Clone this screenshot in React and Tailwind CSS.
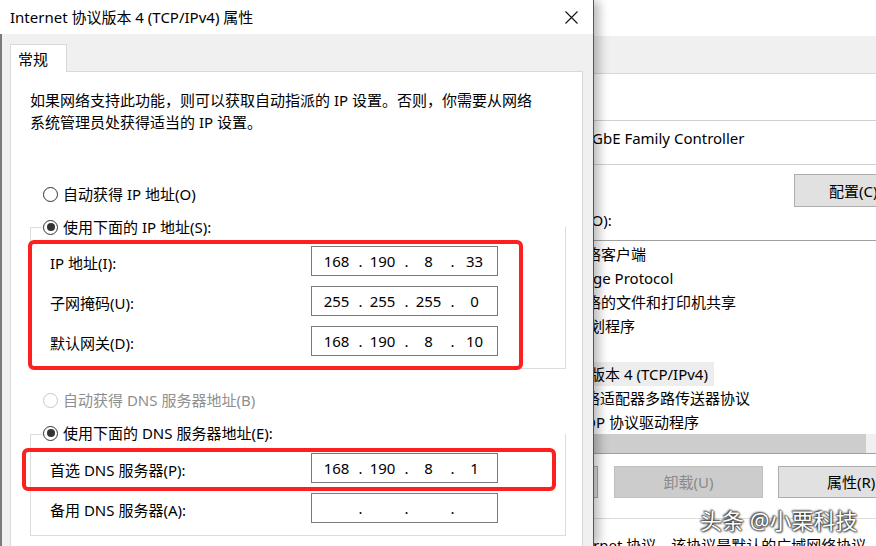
import React from "react";

const Radio = ({ checked = false, disabled = false }) => (
  <span
    className={`w-[15px] h-[15px] rounded-full border flex items-center justify-center bg-white shrink-0 ${
      disabled ? "border-[#c8c8c8]" : "border-[#333333]"
    }`}
  >
    {checked && <span className="w-[8px] h-[8px] rounded-full bg-[#333333]" />}
  </span>
);

const RadioRow = ({ label, checked, disabled, cover }) => (
  <div
    className={`flex items-center gap-[5px] h-[22px] ml-[32px] whitespace-nowrap ${
      cover ? "relative z-10 bg-white w-[522px]" : ""
    }`}
  >
    <Radio checked={checked} disabled={disabled} />
    <span className={disabled ? "text-[#8f8f8f]" : "text-black"}>{label}</span>
  </div>
);

const IpBox = ({ parts }) => (
  <div className="w-[187px] h-[30px] border border-[#7a7a7a] bg-white flex items-center pl-[6px] shrink-0">
    {parts.map((p, i) => (
      <React.Fragment key={i}>
        {i > 0 && <span className="w-[9px] text-center pl-[2px]">.</span>}
        <span className="w-[37px] text-center">{p}</span>
      </React.Fragment>
    ))}
  </div>
);

const FieldRow = ({ label, parts }) => (
  <div className="flex items-center h-[30px] whitespace-nowrap">
    <span className="w-[261px] pt-[3px] shrink-0">{label}</span>
    <IpBox parts={parts} />
  </div>
);

const ListItem = ({ text, shift, selected }) => (
  <div className="h-[24px] flex items-center overflow-hidden">
    <span
      className={`whitespace-nowrap leading-[24px] pl-[4px] pr-[6px] ${selected ? "bg-[#ededed]" : ""}`}
      style={{ marginLeft: shift }}
    >
      {text}
    </span>
  </div>
);

export default function App() {
  return (
    <div className="w-[876px] h-[546px] overflow-hidden flex bg-white text-[15px] leading-[22px] text-black font-['Noto_Sans','Noto_Sans_CJK_SC',sans-serif] relative">
      {/* front dialog */}
      <div className="w-[594px] h-[546px] shrink-0 border-r border-[#555555] relative z-10 shadow-[6px_0_10px_-1px_rgba(0,0,0,0.28)] overflow-hidden">
        <div className="h-[34px] bg-white flex items-center justify-between pl-[10px] pr-[15px]">
          <span className="whitespace-nowrap">Internet 协议版本 4 (TCP/IPv4) 属性</span>
          <svg width="13" height="13" viewBox="0 0 13 13">
            <path d="M0.5 0.5 L12.5 12.5 M12.5 0.5 L0.5 12.5" stroke="#111" strokeWidth="1.1" fill="none" />
          </svg>
        </div>
        <div className="h-[512px] bg-[#f0f0f0] border-l-2 border-[#7a7a7a] pt-[10px] pl-[8px] pr-[10px]">
          <div className="w-[57px] h-[28px] bg-white border-t border-l border-r border-[#d9d9d9] relative z-10 -mb-[1px] pl-[7px] flex items-center">
            常规
          </div>
          <div className="bg-white border border-[#d9d9d9] h-[520px] pt-[17px]">
            <div className="pl-[19px] whitespace-nowrap">
              <p>如果网络支持此功能，则可以获取自动指派的 IP 设置。否则，你需要从网络</p>
              <p>系统管理员处获得适当的 IP 设置。</p>
            </div>

            <div className="mt-[50px]">
              <RadioRow label="自动获得 IP 地址(O)" />
            </div>
            <div className="mt-[11px]">
              <RadioRow label="使用下面的 IP 地址(S):" checked cover />
            </div>
            <div className="relative ml-[19px] w-[536px] -mt-[11px] border border-[#dcdcdc] pt-[18px] pb-[12px] pl-[19px] flex flex-col gap-[10px]">
              <FieldRow label="IP 地址(I):" parts={["168", "190", "8", "33"]} />
              <FieldRow label="子网掩码(U):" parts={["255", "255", "255", "0"]} />
              <FieldRow label="默认网关(D):" parts={["168", "190", "8", "10"]} />
              <div className="absolute left-[-3px] top-[12px] w-[495px] h-[130px] border-[4px] border-[#fe1f1f] rounded-[6px]" />
            </div>

            <div className="mt-[20px]">
              <RadioRow label="自动获得 DNS 服务器地址(B)" disabled />
            </div>
            <div className="mt-[11px]">
              <RadioRow label="使用下面的 DNS 服务器地址(E):" checked cover />
            </div>
            <div className="relative ml-[19px] w-[536px] -mt-[10px] border border-[#dcdcdc] pt-[18px] pb-[12px] pl-[19px] flex flex-col gap-[10px]">
              <FieldRow label="首选 DNS 服务器(P):" parts={["168", "190", "8", "1"]} />
              <FieldRow label="备用 DNS 服务器(A):" parts={["", "", "", ""]} />
              <div className="absolute left-[-9px] top-[13px] w-[534px] h-[43px] border-[4px] border-[#fe1f1f] rounded-[6px]" />
            </div>
          </div>
        </div>
      </div>

      {/* background window */}
      <div className="flex-1 h-[546px] bg-white overflow-hidden">
        <div className="h-[36px]" />
        <div className="h-[38px] bg-[#f0f0f0] border-b border-[#d9d9d9]" />
        <div className="mt-[46px] h-[45px] border-t border-b border-[#d0d0d0] pt-[6px] whitespace-nowrap">
          <span className="ml-[-2px]">GbE Family Controller</span>
        </div>
        <div className="mt-[9px] ml-[200px] h-[33px] w-[120px] bg-[#e1e1e1] border border-[#adadad] flex items-center pl-[34px] whitespace-nowrap">
          配置(C)
        </div>
        <div className="mt-[2px] h-[22px] whitespace-nowrap">
          <span className="ml-[-7px]">(O):</span>
        </div>
        <div className="mt-[9px] border-t border-b border-[#a0a0a0] pt-[1px]">
          <ListItem text="络客户端" shift={-12} />
          <ListItem text="ge Protocol" shift={-5} />
          <ListItem text="络的文件和打印机共享" shift={-12} />
          <ListItem text="划程序" shift={-8} />
          <ListItem text="" shift={0} />
          <ListItem text="版本 4 (TCP/IPv4)" shift={-8} selected />
          <ListItem text="络适配器多路传送器协议" shift={-13} />
          <ListItem text="DP 协议驱动程序" shift={-13} />
          <div className="h-[19px] flex bg-[#f0f0f0]">
            <div className="w-[272px] bg-[#cdcdcd]" />
          </div>
        </div>
        <div className="mt-[12px] h-[32px] flex">
          <div className="w-[4px] shrink-0 border-r border-[#adadad] border-t border-b bg-[#e1e1e1]" />
          <div className="ml-[16px] w-[149px] shrink-0 bg-[#cccccc] border border-[#bfbfbf] text-[#8a8a8a] flex items-center justify-center">
            卸载(U)
          </div>
          <div className="ml-[15px] w-[110px] shrink-0 bg-[#e1e1e1] border border-[#adadad] flex items-center pl-[48px] whitespace-nowrap">
            属性(R)
          </div>
        </div>
        <div className="mt-[20px] border-t border-[#dcdcdc]" />
        <div className="mt-[15px] whitespace-nowrap">
          <span className="ml-[-1px]">rnet 协议。该协议是默认的广域网络协议</span>
        </div>
      </div>

      {/* watermark */}
      <div className="absolute left-[700px] top-[506px] z-20 text-[22px] leading-[28px] text-white whitespace-nowrap [text-shadow:0_0_1px_#333,0_0_2px_#333,1px_1px_2px_#444,-1px_-1px_2px_#444]">
        头条 @小栗科技
      </div>
    </div>
  );
}
